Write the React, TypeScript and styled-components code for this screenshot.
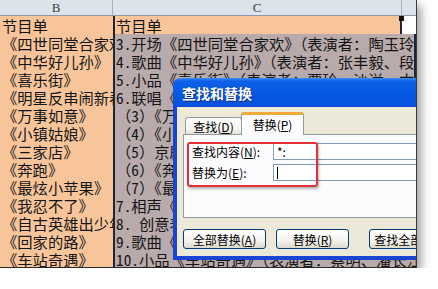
import React from 'react';
import styled, { createGlobalStyle } from 'styled-components';

const GlobalStyle = createGlobalStyle`
  html, body {
    margin: 0;
    padding: 0;
    background: #fff;
  }
  body {
    font-family: "Noto Sans CJK SC", sans-serif;
  }
`;

const Shot = styled.div`
  position: relative;
  width: 416px;
  height: 267px;
  overflow: hidden;
  background: #fff;
  border-right: 1px solid #3a3a3a;
  border-bottom: 1px solid #2a2a2a;
  box-shadow: 4px 5px 9px rgba(0, 0, 0, 0.38);
`;

const HeaderRow = styled.div`
  display: flex;
  height: 16px;
  box-sizing: border-box;
  background: #dde3ea;
  border-bottom: 1px solid #8d99ab;
`;

const HeaderCell = styled.div<{ $w: number }>`
  flex: 0 0 ${p => p.$w}px;
  box-sizing: border-box;
  border-right: 1px solid #a5b0c0;
  font-family: "Liberation Serif", serif;
  font-size: 13px;
  line-height: 15px;
  color: #3c3c3c;
  text-align: center;
`;

const Row = styled.div`
  display: flex;
  height: 18px;
  font-family: "Noto Sans Mono CJK SC", "Noto Sans CJK SC", sans-serif;
  font-size: 15.3px;
  line-height: 18px;
  color: #151515;
  white-space: nowrap;
`;

const NameCell = styled.div`
  flex: 0 0 113px;
  box-sizing: border-box;
  overflow: hidden;
  padding-left: 2px;
  background: #f8c59b;
`;

const ItemCell = styled.div<{ $head?: boolean }>`
  position: relative;
  flex: 0 0 289px;
  box-sizing: border-box;
  padding-left: 1px;
  background: ${p => (p.$head ? '#f8c59b' : '#b9aaab')};
  border-left: 2px solid #1d2638;
  border-right: 2px solid #1d2638;
`;

const Handle = styled.span`
  position: absolute;
  right: -4px;
  top: 0;
  width: 5px;
  height: 5px;
  background: #111;
`;

const Dialog = styled.div`
  position: absolute;
  left: 173px;
  top: 78px;
  width: 272px;
  height: 182px;
  box-sizing: border-box;
  padding: 0 4px 4px 4px;
  border-radius: 7px 7px 0 0;
  background: linear-gradient(
    180deg,
    #3d8df5 0,
    #0d61e8 3px,
    #0558e2 16px,
    #0a52dc 28px,
    #1a45d4 29px,
    #1a45d4 100%
  );
  display: flex;
  flex-direction: column;
  font-family: "Noto Sans CJK SC", sans-serif;
  font-size: 12px;
  color: #000;
`;

const TitleBar = styled.div`
  height: 29px;
  display: flex;
  align-items: center;
  padding-left: 5px;
  color: #fff;
  font-size: 14px;
  font-weight: 700;
  text-shadow: 1px 1px 0 #0a2a8e;
`;

const Body = styled.div`
  flex: 1;
  display: flex;
  flex-direction: column;
  padding: 5px 0 0 6px;
  background: #ece9d8;
`;

const TabStrip = styled.div`
  position: relative;
  z-index: 1;
  display: flex;
  align-items: flex-end;
  height: 22px;
  padding-left: 2px;
`;

const Tab = styled.div<{ $active?: boolean }>`
  box-sizing: border-box;
  width: ${p => (p.$active ? 63 : 57)}px;
  height: ${p => (p.$active ? 23 : 17)}px;
  margin-bottom: ${p => (p.$active ? -1 : 0)}px;
  margin-left: ${p => (p.$active ? -1 : 0)}px;
  border: 1px solid #919b9c;
  border-bottom: none;
  border-top: ${p => (p.$active ? '3px solid #f2a93b' : '1px solid #919b9c')};
  border-radius: 3px 3px 0 0;
  background: ${p =>
    p.$active ? '#fcfcfe' : 'linear-gradient(180deg, #fff, #f4f3ee 70%, #e3e2da)'};
  display: flex;
  align-items: center;
  justify-content: center;
  padding-bottom: ${p => (p.$active ? 2 : 0)}px;
`;

const Panel = styled.div`
  position: relative;
  height: 84px;
  box-sizing: border-box;
  padding: 8px 0 0 8px;
  border: 1px solid #919b9c;
  background: #fcfcfe;
`;

const FieldRow = styled.div`
  display: flex;
  align-items: center;
  height: 17px;
  margin-bottom: 4px;
`;

const Label = styled.div`
  flex: 0 0 81px;
  line-height: 17px;
`;

const Input = styled.div`
  flex: 1;
  height: 17px;
  box-sizing: border-box;
  padding-left: 3px;
  border: 1px solid #7f9db9;
  background: #fff;
  line-height: 15px;
  display: flex;
  align-items: center;
`;

const Caret = styled.span`
  display: inline-block;
  width: 1px;
  height: 12px;
  background: #000;
`;

const Highlight = styled.div`
  position: absolute;
  left: 3px;
  top: 7px;
  width: 131px;
  height: 45px;
  box-sizing: border-box;
  border: 2px solid #e2303a;
  border-radius: 3px;
  box-shadow: 1px 2px 3px rgba(0, 0, 0, 0.3);
`;

const ButtonRow = styled.div`
  display: grid;
  grid-template-columns: 83px 73px 80px;
  column-gap: 10px;
  margin-top: 11px;
`;

const Button = styled.div<{ $push?: boolean }>`
  height: 20px;
  box-sizing: border-box;
  margin-left: ${p => (p.$push ? 10 : 0)}px;
  border: 1px solid #003c74;
  border-radius: 3px;
  background: linear-gradient(180deg, #fff 0%, #f5f4ef 55%, #dcd8cc 100%);
  display: flex;
  align-items: center;
  justify-content: center;
  white-space: nowrap;
`;

const names = [
  '节目单',
  '《四世同堂合家欢》',
  '《中华好儿孙》',
  '《喜乐街》',
  '《明星反串闹新春》',
  '《万事如意》',
  '《小镇姑娘》',
  '《三家店》',
  '《奔跑》',
  '《最炫小苹果》',
  '《我忍不了》',
  '《自古英雄出少年》',
  '《回家的路》',
  '《车站奇遇》',
];

const items = [
  '节目单',
  '3.开场《四世同堂合家欢》（表演者：陶玉玲',
  '4.歌曲《中华好儿孙》（表演者：张丰毅、段',
  '5.小品《喜乐街》（表演者：贾玲、沙溢、本',
  '6.联唱《明星反串闹新春》（表演者：李玉刚',
  '（3）《万事如意》（表演者：王祖蓝',
  '（4）《小镇姑娘》（表演者：杨幂',
  '（5）京剧《三家店》（表演者：于魁智',
  '（6）《奔跑》（表演者：羽泉',
  '（7）《最炫小苹果》（表演者：筷子兄弟',
  '7.相声《我忍不了》（表演者：岳云鹏',
  '8. 创意表演《自古英雄出少年》',
  '9.歌曲《回家的路》（表演者：刘德华',
  '10.小品《车站奇遇》（表演者：蔡明、潘长江',
];

const App: React.FC = () => {
  return (
    <>
      <GlobalStyle />
      <Shot>
        <HeaderRow>
          <HeaderCell $w={113}>B</HeaderCell>
          <HeaderCell $w={289}>C</HeaderCell>
          <HeaderCell $w={20} />
        </HeaderRow>
        {names.map((name, i) => (
          <Row key={i}>
            <NameCell>{name}</NameCell>
            <ItemCell $head={i === 0}>
              {i === 0 && <Handle />}
              {items[i]}
            </ItemCell>
          </Row>
        ))}

        <Dialog>
          <TitleBar>查找和替换</TitleBar>
          <Body>
            <TabStrip>
              <Tab>
                查找(<u>D</u>)
              </Tab>
              <Tab $active>
                替换(<u>P</u>)
              </Tab>
            </TabStrip>
            <Panel>
              <FieldRow>
                <Label>
                  查找内容(<u>N</u>):
                </Label>
                <Input>*:</Input>
              </FieldRow>
              <FieldRow>
                <Label>
                  替换为(<u>E</u>):
                </Label>
                <Input>
                  <Caret />
                </Input>
              </FieldRow>
              <Highlight />
            </Panel>
            <ButtonRow>
              <Button>
                全部替换(<u>A</u>)
              </Button>
              <Button>
                替换(<u>R</u>)
              </Button>
              <Button $push>
                查找全部(<u>I</u>)
              </Button>
            </ButtonRow>
          </Body>
        </Dialog>
      </Shot>
    </>
  );
};

export default App;
